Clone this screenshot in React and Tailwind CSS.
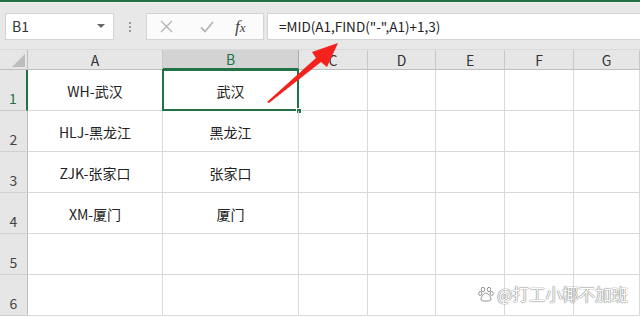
import React from 'react';

const cols = ['A', 'B', 'C', 'D', 'E', 'F', 'G'];
const rows = [
    { n: 1, a: 'WH-武汉', b: '武汉' },
    { n: 2, a: 'HLJ-黑龙江', b: '黑龙江' },
    { n: 3, a: 'ZJK-张家口', b: '张家口' },
    { n: 4, a: 'XM-厦门', b: '厦门' },
    { n: 5, a: '', b: '' },
    { n: 6, a: '', b: '' },
];

const font = { fontFamily: '"Noto Sans CJK SC", "Noto Sans", sans-serif' };

export default function App() {
    return (
        <div className="relative w-[640px] h-[317px] overflow-hidden bg-white text-[#222]" style={font}>
            {/* ribbon edge */}
            <div className="h-[2px] bg-[#217346]" />
            <div className="h-[1px] bg-[#f3f3f3]" />

            {/* formula bar */}
            <div className="h-[47px] bg-[#e8e8e8] flex items-start pt-[10px] pl-[5px] border-b border-[#dadada]">
                <div className="w-[109px] h-[27px] bg-white border border-[#d4d4d4] flex items-center pl-[6px] pr-[8px] justify-between">
                    <span className="text-[14px] text-[#333]">B1</span>
                    <svg width="8" height="5" viewBox="0 0 8 5"><path d="M0 0h8L4 4z" fill="#666" /></svg>
                </div>
                <div className="w-[32px] h-[27px] flex flex-col items-center justify-center gap-[2px]">
                    <span className="w-[2px] h-[2px] bg-[#9a9a9a]" />
                    <span className="w-[2px] h-[2px] bg-[#9a9a9a]" />
                    <span className="w-[2px] h-[2px] bg-[#9a9a9a]" />
                </div>
                <div className="w-[118px] h-[27px] bg-[#fbfbfb] border border-[#d4d4d4] flex items-center">
                    <svg className="ml-[13px]" width="13" height="13" viewBox="0 0 13 13">
                        <path d="M1 1L12 12M12 1L1 12" stroke="#b5b5b5" strokeWidth="1.4" />
                    </svg>
                    <svg className="ml-[27px]" width="14" height="12" viewBox="0 0 14 12">
                        <path d="M1 6.5L5 10.5L13 1" stroke="#b5b5b5" strokeWidth="1.8" fill="none" />
                    </svg>
                    <span className="ml-[21px] text-[17px] italic text-[#444] leading-none" style={{ fontFamily: '"Liberation Serif", serif' }}>
                        f<span className="text-[13px]">x</span>
                    </span>
                </div>
                <div className="ml-[3px] flex-1 h-[27px] bg-white border border-[#d4d4d4] border-r-0 flex items-center pl-[11px]">
                    <span className="text-[13.5px] text-[#222]">=MID(A1,FIND("-",A1)+1,3)</span>
                </div>
            </div>

            {/* sheet */}
            <div className="grid grid-cols-[28px_135px_136px_69px_68px_69px_69px_1fr]">
                <div className="h-[20px] bg-[#e6e6e6] border-r border-b border-[#bfbfbf] flex items-end justify-end pr-[2px] pb-[2px]">
                    <svg width="13" height="13" viewBox="0 0 13 13"><path d="M13 0V13H0z" fill="#bdbdbd" /></svg>
                </div>
                {cols.map(c => (
                    <div
                        key={c}
                        className={`h-[20px] flex items-end justify-center text-[14px] leading-[18px] border-r border-b ${c === 'B' ? 'bg-[#d3d3d3] text-[#217346] border-r-[#ababab] border-b-[#217346] border-b-2' : 'bg-[#e6e6e6] text-[#333] border-r-[#c8c8c8] border-b-[#bfbfbf]'}`}
                    >
                        {c}
                    </div>
                ))}
                {rows.map(r => (
                    <React.Fragment key={r.n}>
                        <div className={`h-[41px] bg-[#e6e6e6] border-r border-b flex items-end justify-center pb-[1px] text-[14px] ${r.n === 1 ? 'bg-[#d3d3d3] text-[#217346] border-r-2 border-r-[#217346] border-b-[#c8c8c8]' : 'text-[#444] border-r-[#bfbfbf] border-b-[#d0d0d0]'}`}>
                            {r.n}
                        </div>
                        <div className="h-[41px] border-r border-b border-[#d9d9d9] flex items-center justify-center pt-[2px] text-[14px]">{r.a}</div>
                        <div className="relative h-[41px] border-r border-b border-[#d9d9d9] flex items-center justify-center pt-[2px] text-[14px]">
                            {r.b}
                            {r.n === 1 && (
                                <>
                                    <div className="absolute -left-[1px] -top-[1px] right-[-1px] bottom-[-1px] border-2 border-[#217346]" />
                                    <div className="absolute right-[-4px] bottom-[-4px] w-[6px] h-[6px] bg-[#217346] border border-white" />
                                </>
                            )}
                        </div>
                        {[0, 1, 2, 3, 4].map(i => (
                            <div key={i} className="h-[41px] border-r border-b border-[#d9d9d9]" />
                        ))}
                    </React.Fragment>
                ))}
            </div>

            {/* red annotation arrow */}
            <svg className="absolute left-0 top-0 pointer-events-none" width="640" height="317">
                <path d="M267 102 L316 58 L312 52 L338 43 L327 67 L321 62 L269 103 Z" fill="#f5221b" />
            </svg>

            {/* watermark */}
            <div className="absolute left-[140px] top-[283px] w-[488px] flex justify-end items-center gap-[3px] text-[16.5px] leading-[22px] text-white pointer-events-none" style={{ textShadow: '0 0 1px #666, 0 0 1px #666' }}>
                <svg width="16" height="16" viewBox="0 0 16 16">
                    <g fill="#fff" stroke="#777" strokeWidth="0.8">
                        <ellipse cx="5" cy="3.5" rx="1.7" ry="2.2" />
                        <ellipse cx="11" cy="3.5" rx="1.7" ry="2.2" />
                        <ellipse cx="2.3" cy="7.5" rx="1.6" ry="2" />
                        <ellipse cx="13.7" cy="7.5" rx="1.6" ry="2" />
                        <path d="M8 7c2 0 5 4 5 6s-2 2-5 2-5 0-5-2 3-6 5-6z" />
                    </g>
                </svg>
                <span>@打工小椰不加班</span>
            </div>
        </div>
    );
}
